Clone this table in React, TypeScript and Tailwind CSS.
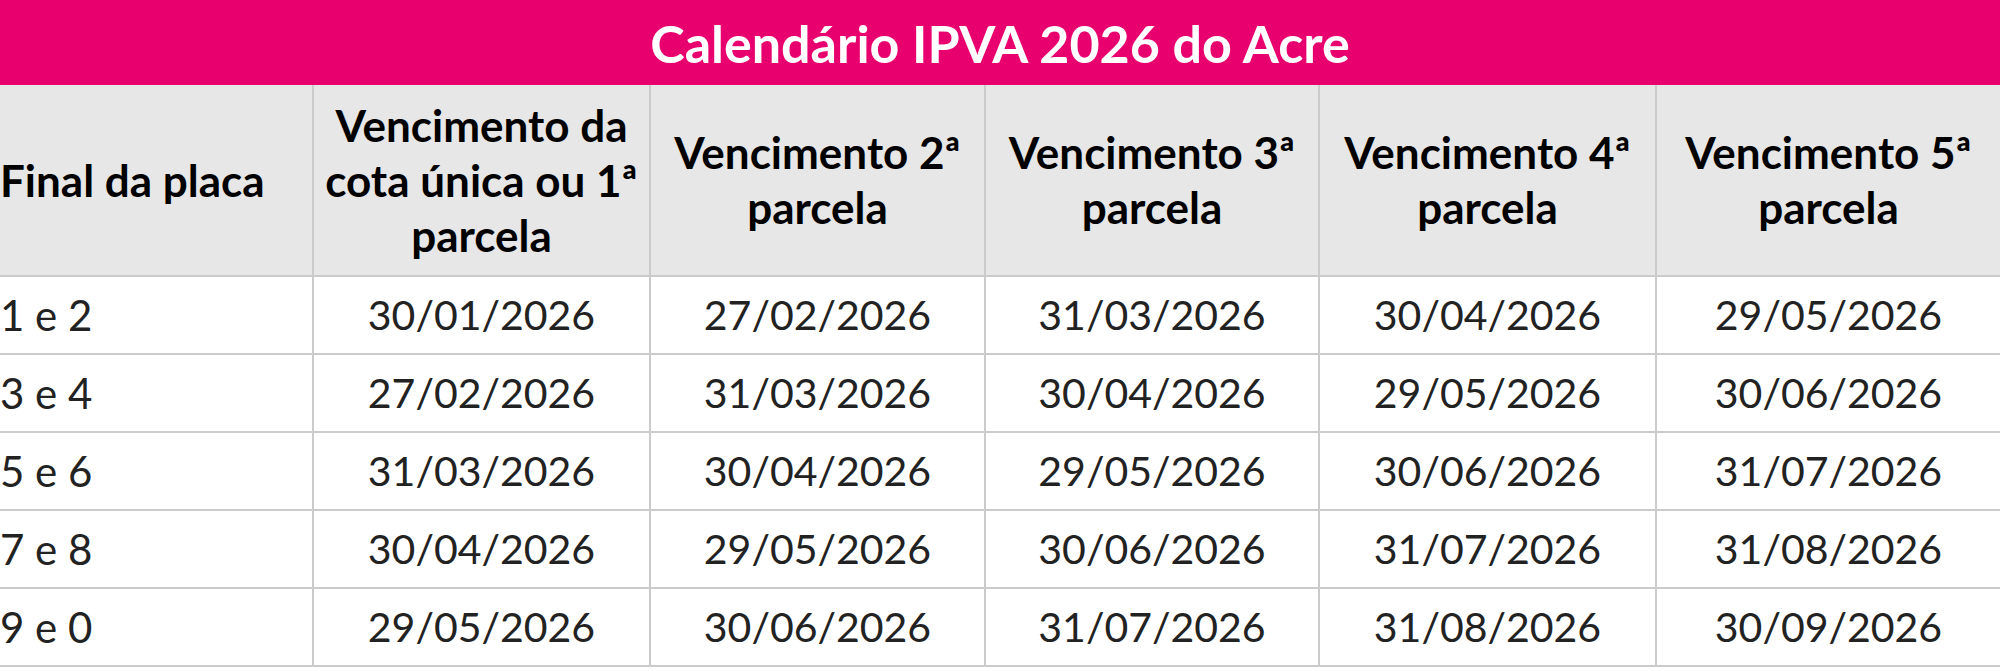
import React from 'react';

const HEADERS: string[][] = [
  ['Vencimento da', 'cota única ou 1ª', 'parcela'],
  ['Vencimento 2ª', 'parcela'],
  ['Vencimento 3ª', 'parcela'],
  ['Vencimento 4ª', 'parcela'],
  ['Vencimento 5ª', 'parcela'],
];

const ROWS: { placa: string; datas: string[] }[] = [
  { placa: '1 e 2', datas: ['30/01/2026', '27/02/2026', '31/03/2026', '30/04/2026', '29/05/2026'] },
  { placa: '3 e 4', datas: ['27/02/2026', '31/03/2026', '30/04/2026', '29/05/2026', '30/06/2026'] },
  { placa: '5 e 6', datas: ['31/03/2026', '30/04/2026', '29/05/2026', '30/06/2026', '31/07/2026'] },
  { placa: '7 e 8', datas: ['30/04/2026', '29/05/2026', '30/06/2026', '31/07/2026', '31/08/2026'] },
  { placa: '9 e 0', datas: ['29/05/2026', '30/06/2026', '31/07/2026', '31/08/2026', '30/09/2026'] },
];

export default function App() {
  return (
    <div className="w-[2000px] h-[671px] bg-white font-['Lato','Open_Sans',sans-serif] overflow-hidden">
      <div className="h-[85px] bg-[#e8006f] flex items-center justify-center">
        <h1 className="text-white font-bold text-[52px] leading-none">Calendário IPVA 2026 do Acre</h1>
      </div>

      <div className="grid grid-cols-[312px_335px_333px_332px_335px_1fr] grid-rows-[190px_repeat(5,76px)] gap-[2px] bg-[#cbcbcb] pb-[2px]">
        <div className="bg-[#e7e7e7] flex items-center text-black font-bold text-[44px] leading-[55px]">
          Final da placa
        </div>
        {HEADERS.map((lines, i) => (
          <div
            key={i}
            className="bg-[#e7e7e7] flex flex-col items-center justify-center text-center text-black font-bold text-[44px] leading-[55px]"
          >
            {lines.map((l) => (
              <span key={l} className="whitespace-nowrap">{l}</span>
            ))}
          </div>
        ))}

        {ROWS.map((row) => (
          <React.Fragment key={row.placa}>
            <div className="bg-white flex items-center text-[#222] text-[42px]">{row.placa}</div>
            {row.datas.map((d, j) => (
              <div key={j} className="bg-white flex items-center justify-center text-[#222] text-[41px]">
                {d}
              </div>
            ))}
          </React.Fragment>
        ))}
      </div>
    </div>
  );
}
